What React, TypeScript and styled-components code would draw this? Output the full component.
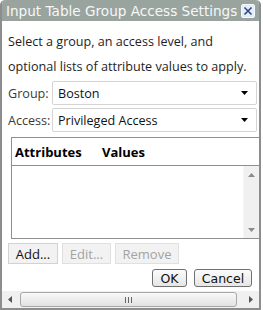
import React from 'react';
import styled, { createGlobalStyle } from 'styled-components';

const GlobalStyle = createGlobalStyle`
  html, body {
    margin: 0;
    padding: 0;
    background: #ffffff;
  }
  * {
    box-sizing: border-box;
  }
`;

const Window = styled.div`
  width: 261px;
  height: 310px;
  display: flex;
  flex-direction: column;
  background: #ffffff;
  border: 2px solid #8d8d8d;
  border-top: none;
  border-radius: 5px 5px 0 0;
  overflow: hidden;
  font-family: 'Open Sans', 'Noto Sans', sans-serif;
  color: #1e1e1e;
`;

const TitleBar = styled.div`
  height: 21px;
  margin: 0 -2px;
  padding: 0 6px 0 6px;
  display: flex;
  align-items: center;
  justify-content: space-between;
  background: #9aa49f;
  border-radius: 5px 5px 0 0;
  color: #f6f8f7;
  font-family: 'DejaVu Sans', sans-serif;
  font-size: 13.6px;
  white-space: nowrap;
`;

const CloseBox = styled.div`
  width: 14px;
  height: 14px;
  flex-shrink: 0;
  display: flex;
  align-items: center;
  justify-content: center;
  background: #e4ecf7;
  border: 1px solid #f4f8ff;
  border-radius: 2px;
`;

const Content = styled.div`
  flex: 1;
  padding: 8px 2px 0 6px;
  display: flex;
  flex-direction: column;
`;

const Intro = styled.p`
  margin: 0 0 2px;
  font-size: 12.6px;
  line-height: 25px;
  white-space: nowrap;
`;

const FieldGrid = styled.div`
  display: grid;
  grid-template-columns: 44px 1fr;
  row-gap: 3px;
  align-items: center;
`;

const Label = styled.span`
  font-size: 12.6px;
  color: #3a3a3a;
`;

const Select = styled.div`
  height: 24px;
  padding: 0 8px 0 5px;
  display: flex;
  align-items: center;
  justify-content: space-between;
  border: 1px solid #d4d4d4;
  border-radius: 2px;
  font-size: 12.6px;
  color: #111111;
`;

const Table = styled.div`
  margin: 5px -2px 0 3px;
  height: 102px;
  display: flex;
  flex-direction: column;
  border: 1px solid #8f8f8f;
  border-right: none;
`;

const HeaderRow = styled.div`
  height: 28px;
  padding: 0 0 0 3px;
  display: flex;
  align-items: center;
  border-bottom: 1px solid #8f8f8f;
  font-size: 13px;
  font-weight: 700;
  color: #000000;
`;

const HeaderCell = styled.span<{ $w?: number }>`
  width: ${(p) => (p.$w ? `${p.$w}px` : 'auto')};
`;

const TableBody = styled.div`
  flex: 1;
  display: flex;
  justify-content: flex-end;
`;

const VScroll = styled.div`
  width: 16px;
  display: flex;
  flex-direction: column;
  justify-content: space-between;
  align-items: center;
  padding: 7px 0 6px;
  background: #f0f0f0;
  border-left: 1px solid #f6f6f6;
`;

const ButtonRow = styled.div<{ $end?: boolean }>`
  display: flex;
  gap: ${(p) => (p.$end ? '7px' : '4px')};
  justify-content: ${(p) => (p.$end ? 'flex-end' : 'flex-start')};
  margin-top: ${(p) => (p.$end ? '5px' : '4px')};
  padding-right: ${(p) => (p.$end ? '5px' : '0')};
`;

const FlatButton = styled.div<{ $disabled?: boolean; $w: number }>`
  width: ${(p) => p.$w}px;
  height: 21px;
  display: flex;
  align-items: center;
  justify-content: center;
  background: #f2f2f2;
  border: 1px solid ${(p) => (p.$disabled ? '#e0e0e0' : '#d2d2d2')};
  font-size: 13px;
  color: ${(p) => (p.$disabled ? '#a3a3a3' : '#111111')};
`;

const DialogButton = styled.div<{ $w: number }>`
  width: ${(p) => p.$w}px;
  height: 18px;
  display: flex;
  align-items: center;
  justify-content: center;
  background: linear-gradient(#fbfbfb, #e6e6e6);
  border: 1px solid #707070;
  border-radius: 3px;
  font-family: 'DejaVu Sans', sans-serif;
  font-size: 12.5px;
  color: #111111;
`;

const HScroll = styled.div`
  height: 17px;
  margin-top: auto;
  display: flex;
  align-items: center;
  background: #f0f0f0;
`;

const ArrowCell = styled.div`
  width: 16px;
  height: 100%;
  display: flex;
  align-items: center;
  justify-content: center;
`;

const Track = styled.div`
  flex: 1;
  height: 100%;
  padding: 0 6px 0 2px;
  display: flex;
  align-items: center;
`;

const Thumb = styled.div`
  flex: 1;
  height: 15px;
  display: flex;
  align-items: center;
  justify-content: center;
  background: linear-gradient(#f8f8f8, #e2e2e2);
  border: 1px solid #a8a8a8;
  border-radius: 3px;
`;

const Tri = ({ dir, color = '#000' }: { dir: 'up' | 'down' | 'left' | 'right'; color?: string }) => {
  const pts = {
    down: '0,0 7,0 3.5,4',
    up: '0,4 7,4 3.5,0',
    left: '4,0 4,7 0,3.5',
    right: '0,0 0,7 4,3.5',
  }[dir];
  const vert = dir === 'up' || dir === 'down';
  return (
    <svg width={vert ? 7 : 4} height={vert ? 4 : 7} viewBox={vert ? '0 0 7 4' : '0 0 4 7'}>
      <polygon points={pts} fill={color} />
    </svg>
  );
};

const Grip = () => (
  <svg width="7" height="6" viewBox="0 0 7 6">
    <rect x="0" y="0" width="1" height="6" fill="#666" />
    <rect x="3" y="0" width="1" height="6" fill="#666" />
    <rect x="6" y="0" width="1" height="6" fill="#666" />
  </svg>
);

const CloseIcon = () => (
  <svg width="10" height="10" viewBox="0 0 10 10">
    <path d="M1.5 1.5 L8.5 8.5 M8.5 1.5 L1.5 8.5" stroke="#2d4a86" strokeWidth="1.6" />
  </svg>
);

export default function App() {
  return (
    <>
      <GlobalStyle />
      <Window>
        <TitleBar>
          <span>Input Table Group Access Settings</span>
          <CloseBox>
            <CloseIcon />
          </CloseBox>
        </TitleBar>
        <Content>
          <Intro>
            Select a group, an access level, and
            <br />
            optional lists of attribute values to apply.
          </Intro>
          <FieldGrid>
            <Label>Group:</Label>
            <Select>
              <span>Boston</span>
              <Tri dir="down" />
            </Select>
            <Label>Access:</Label>
            <Select>
              <span>Privileged Access</span>
              <Tri dir="down" />
            </Select>
          </FieldGrid>
          <Table>
            <HeaderRow>
              <HeaderCell $w={87}>Attributes</HeaderCell>
              <HeaderCell>Values</HeaderCell>
            </HeaderRow>
            <TableBody>
              <VScroll>
                <Tri dir="up" color="#8a8a8a" />
                <Tri dir="down" color="#8a8a8a" />
              </VScroll>
            </TableBody>
          </Table>
          <ButtonRow>
            <FlatButton $w={50}>Add...</FlatButton>
            <FlatButton $w={49} $disabled>Edit...</FlatButton>
            <FlatButton $w={64} $disabled>Remove</FlatButton>
          </ButtonRow>
          <ButtonRow $end>
            <DialogButton $w={35}>OK</DialogButton>
            <DialogButton $w={58}>Cancel</DialogButton>
          </ButtonRow>
        </Content>
        <HScroll>
          <ArrowCell>
            <Tri dir="left" color="#555" />
          </ArrowCell>
          <Track>
            <Thumb>
              <Grip />
            </Thumb>
          </Track>
          <ArrowCell>
            <Tri dir="right" color="#555" />
          </ArrowCell>
        </HScroll>
      </Window>
    </>
  );
}
